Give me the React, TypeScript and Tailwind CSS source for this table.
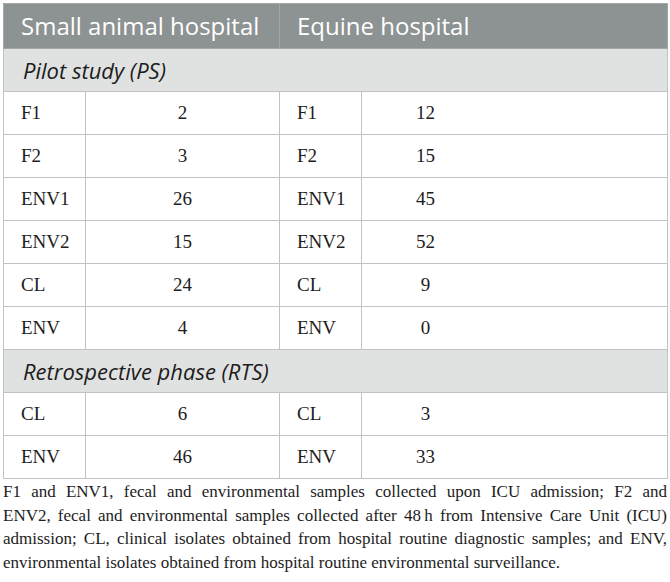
const sections = [
  {
    title: "Pilot study (PS)",
    rows: [
      ["F1", "2", "F1", "12"],
      ["F2", "3", "F2", "15"],
      ["ENV1", "26", "ENV1", "45"],
      ["ENV2", "15", "ENV2", "52"],
      ["CL", "24", "CL", "9"],
      ["ENV", "4", "ENV", "0"],
    ],
  },
  {
    title: "Retrospective phase (RTS)",
    rows: [
      ["CL", "6", "CL", "3"],
      ["ENV", "46", "ENV", "33"],
    ],
  },
];

// footnote lines are broken where the original breaks them
const footnote = [
  "F1 and ENV1, fecal and environmental samples collected upon ICU admission; F2 and",
  "ENV2, fecal and environmental samples collected after 48\u2009h from Intensive Care Unit (ICU)",
  "admission; CL, clinical isolates obtained from hospital routine diagnostic samples; and ENV,",
];

const sans = "font-['Open_Sans',_'Noto_Sans',_sans-serif]";
const serif = "font-['Liberation_Serif',_serif]";

export default function App() {
  return (
    <div className="w-[670px] h-[582px] bg-white pt-[3px] px-[3px] overflow-hidden">
      <table className="w-[664px] table-fixed border-collapse border border-[#c5c9c6]">
        <colgroup>
          <col className="w-[82px]" />
          <col className="w-[194px]" />
          <col className="w-[82px]" />
          <col className="w-[306px]" />
        </colgroup>
        <thead>
          <tr className="h-[45px] bg-[#8d9293]">
            <th
              colSpan={2}
              className={`${sans} border border-[#a4a8a8] pl-[17px] text-left text-[24px] font-normal text-white`}
            >
              Small animal hospital
            </th>
            <th
              colSpan={2}
              className={`${sans} border border-[#a4a8a8] pl-[17px] text-left text-[24px] font-normal text-white`}
            >
              Equine hospital
            </th>
          </tr>
        </thead>
        <tbody>
          {sections.map((section) => (
            <>
              <tr key={section.title} className="h-[43px] bg-[#e0e2e1]">
                <td
                  colSpan={4}
                  className={`${sans} border border-[#c0c3c1] pl-[19px] text-[22px] italic text-[#1d1d1d]`}
                >
                  {section.title}
                </td>
              </tr>
              {section.rows.map((row, i) => (
                <tr key={section.title + i} className={`${serif} h-[43px] text-[19px] text-[#1d1d1d]`}>
                  <td className="border border-[#c0c3c1] pl-[17px]">{row[0]}</td>
                  <td className="border border-[#c0c3c1] text-center">{row[1]}</td>
                  <td className="border border-[#c0c3c1] pl-[17px]">{row[2]}</td>
                  <td className="border border-[#c0c3c1] pr-[178px] text-center">{row[3]}</td>
                </tr>
              ))}
            </>
          ))}
        </tbody>
      </table>
      <div className={`${serif} mt-[1px] text-[17px] leading-[23.5px] text-[#1d1d1d]`}>
        {footnote.map((line) => (
          <p key={line} className="text-justify whitespace-nowrap [text-align-last:justify]">
            {line}
          </p>
        ))}
        <p>environmental isolates obtained from hospital routine environmental surveillance.</p>
      </div>
    </div>
  );
}
